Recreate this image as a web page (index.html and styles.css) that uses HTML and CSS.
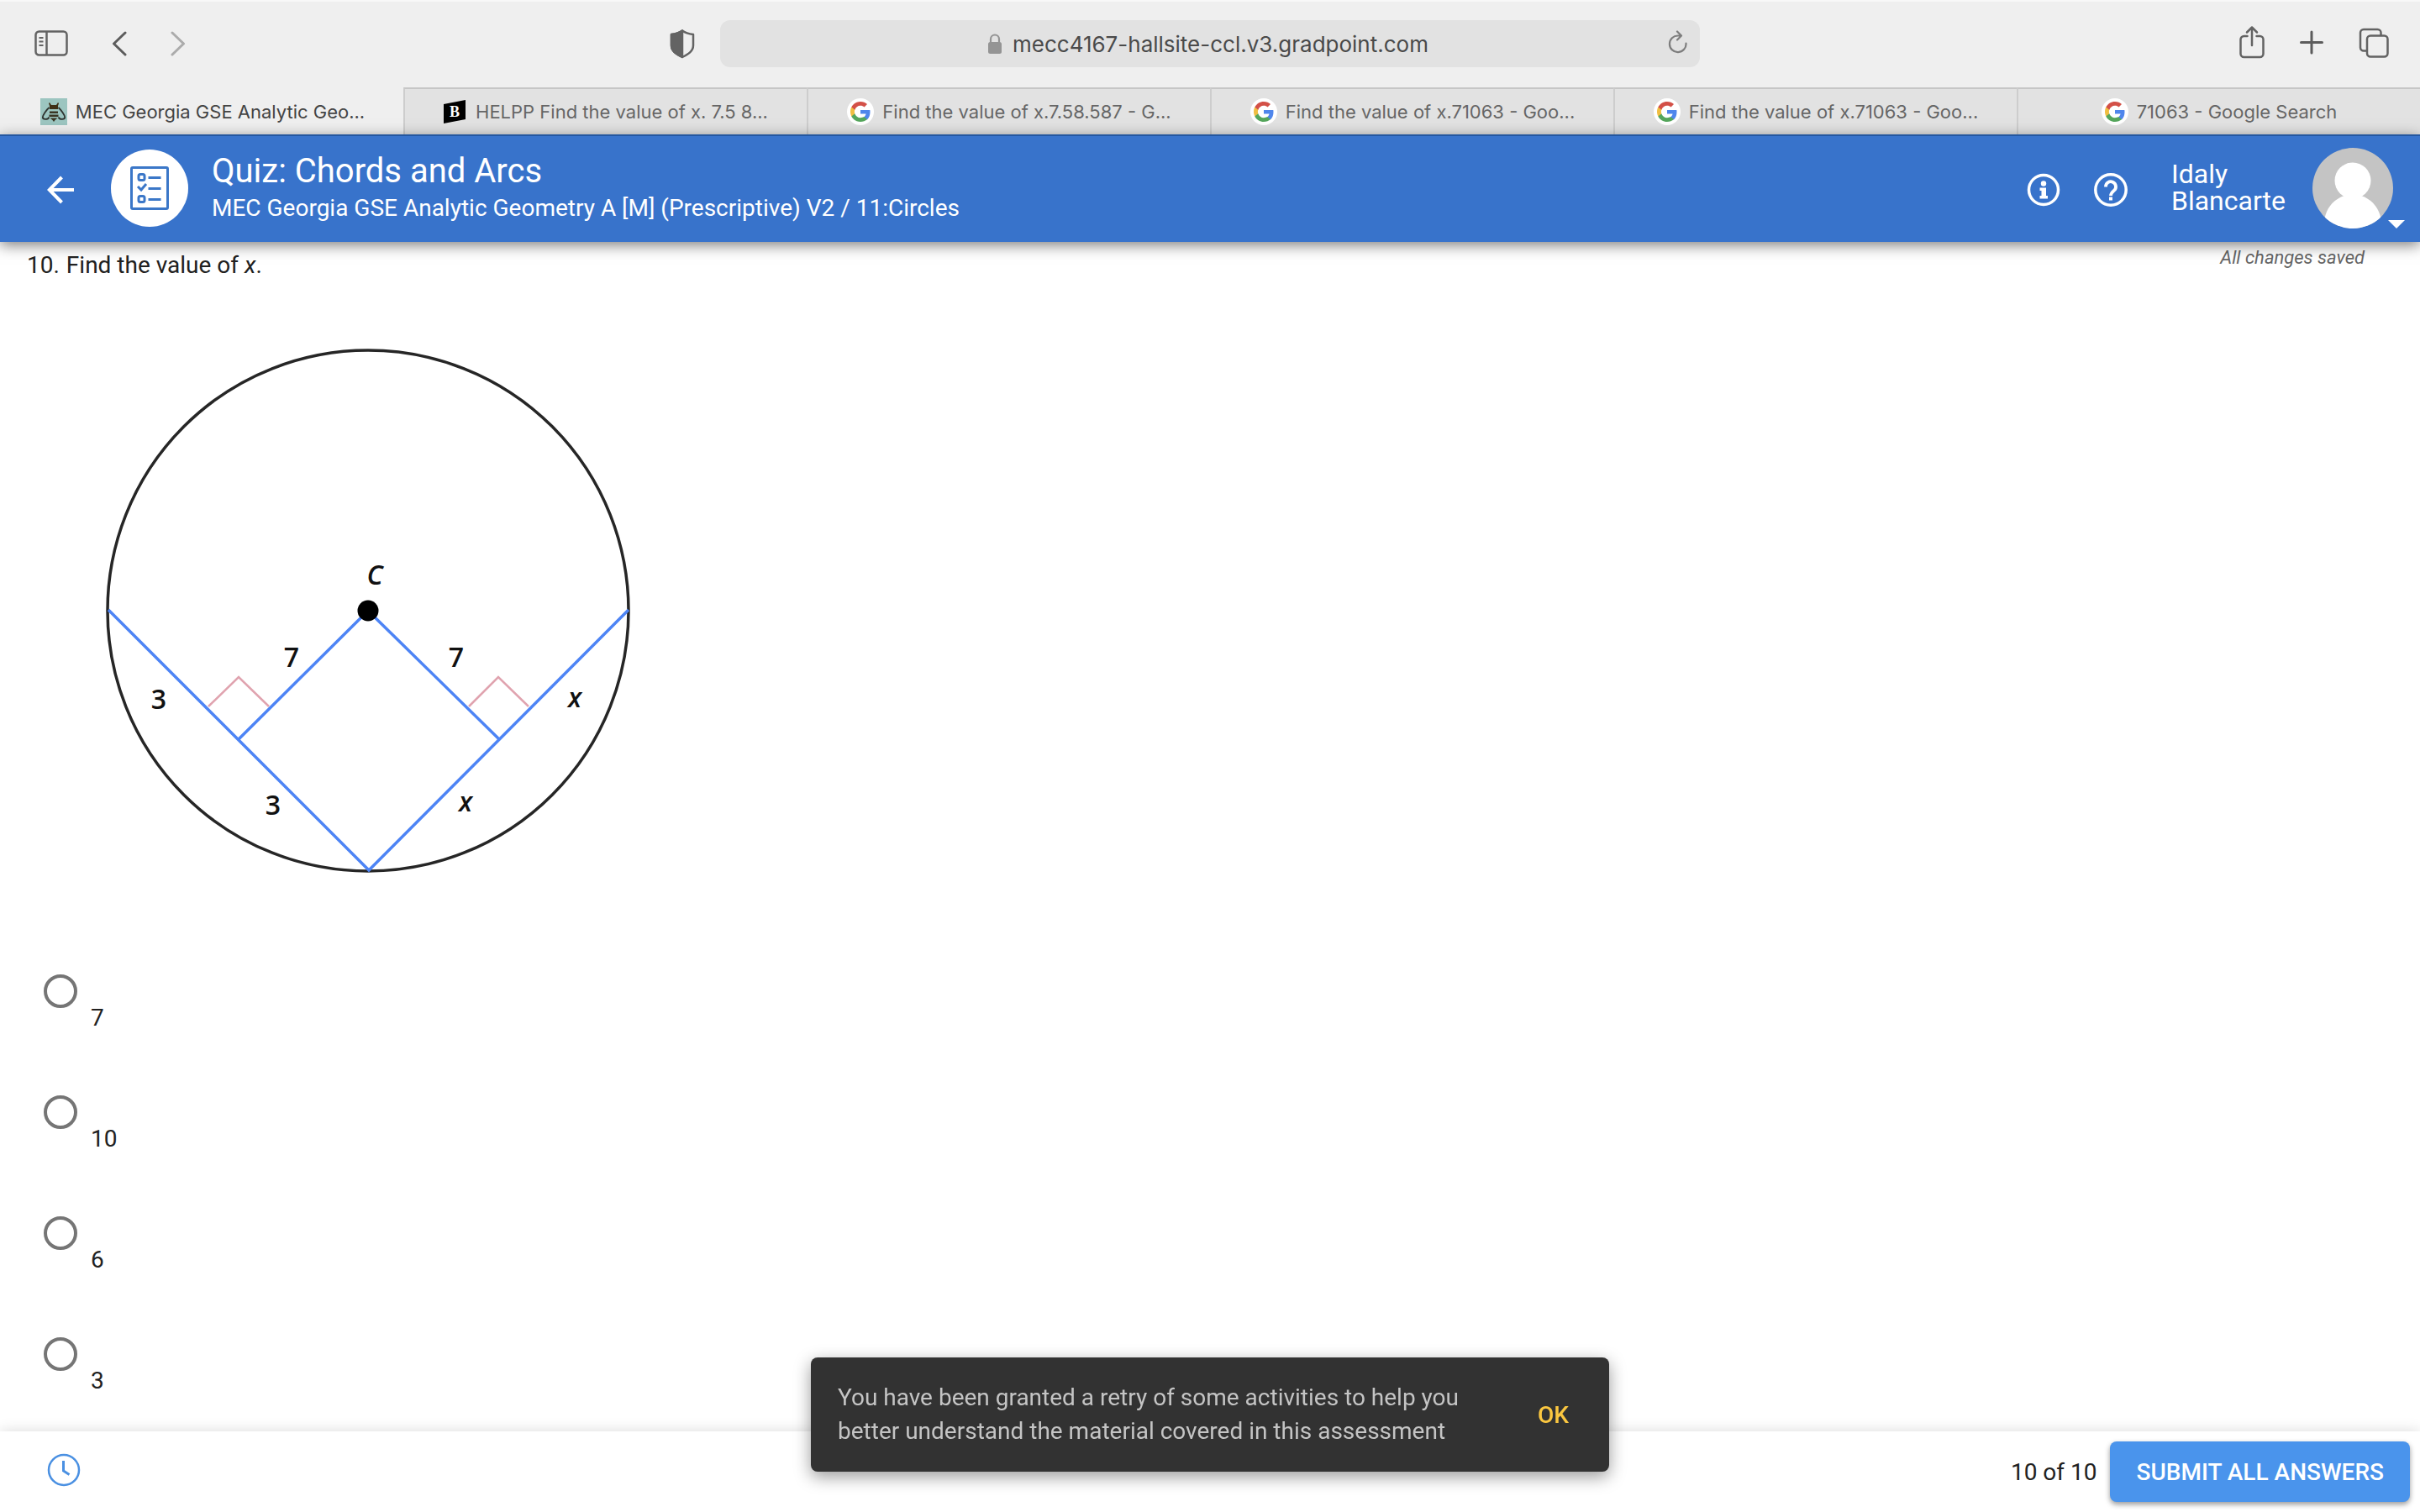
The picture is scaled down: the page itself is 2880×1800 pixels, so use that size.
FILE: index.html
```html
<!DOCTYPE html>
<html lang="en">
    <head>
        <meta charset="utf-8">
        <title>Quiz: Chords and Arcs</title>
        <link rel="stylesheet" href="styles.css">
    </head>
    <body>
        <svg class="sprite" aria-hidden="true">
            <symbol id="google" viewBox="0 0 32 32">
                <circle cx="16" cy="16" r="16" fill="#fff"/>
                <g transform="translate(4 4)">
                    <path fill="#4f86ec" d="M23.5 12.3c0-.9-.1-1.5-.2-2.3H12v4.6h6.6c-.3 1.5-1.100 2.800-2.400 3.700v3h3.900c2.200-2.100 3.400-5.200 3.400-9z"/>
                    <path fill="#55a65c" d="M12 24c3.200 0 6-1.100 8-2.900l-3.900-3c-1.100.7-2.500 1.200-4.100 1.200-3.100 0-5.800-2.100-6.700-5H1.300v3.100C3.300 21.300 7.300 24 12 24z"/>
                    <path fill="#f0be42" d="M5.300 14.300c-.2-.7-.4-1.500-.4-2.300s.1-1.600.4-2.300V6.600H1.300C.5 8.200 0 10 0 12s.5 3.800 1.300 5.400z"/>
                    <path fill="#d35047" d="M12 4.700c1.800 0 3.300.6 4.600 1.800L20 3.100C18 1.200 15.200 0 12 0 7.300 0 3.300 2.700 1.300 6.600l4 3.100c.9-2.900 3.600-5 6.700-5z"/>
                </g>
            </symbol>
        </svg>

        <div class="toolbar">
            <div class="tools tools-left">
                <button class="tool" aria-label="Show sidebar">
                    <svg width="40" height="32" viewBox="0 0 40 32" fill="none" stroke="#636363" stroke-width="2.500">
                        <rect x="1.500" y="1.500" width="37" height="28" rx="4"/>
                        <path d="M14.500 2v27"/>
                        <path d="M5.500 9h5M5.500 13.500h5M5.500 18h5" stroke-width="1.800"/>
                    </svg>
                </button>
                <button class="tool" aria-label="Back">
                    <svg width="18" height="32" viewBox="0 0 18 32" fill="none" stroke="#5c5c5c" stroke-width="3" stroke-linecap="round" stroke-linejoin="round"><path d="M16 3L2.500 16 16 29"/></svg>
                </button>
                <button class="tool" aria-label="Forward">
                    <svg width="18" height="32" viewBox="0 0 18 32" fill="none" stroke="#ababab" stroke-width="3" stroke-linecap="round" stroke-linejoin="round"><path d="M2 3l13.500 13L2 29"/></svg>
                </button>
                <button class="tool tool-shield" aria-label="Privacy report">
                    <svg width="30" height="36" viewBox="0 0 30 36" fill="none" stroke="#636363" stroke-width="2.500" stroke-linejoin="round">
                        <path d="M15 2.500C11 5.500 6.500 6.500 2 7v13c0 7 6 10.500 13 14 7-3.500 13-7 13-14V7c-4.500-.5-9-1.500-13-4.500z"/>
                        <path fill="#636363" d="M15 2.500C11 5.500 6.500 6.500 2 7v13c0 7 6 10.500 13 14z"/>
                    </svg>
                </button>
            </div>
            <div class="address">
                <div class="address-text">
                    <svg width="18" height="26" viewBox="0 0 18 26"><path d="M4 12V7.500a5 5 0 0 1 10 0V12" fill="none" stroke="#949494" stroke-width="2.200"/><rect x="1" y="11" width="16" height="14" rx="2.500" fill="#949494"/></svg>
                    <input type="text" aria-label="Address" value="mecc4167-hallsite-ccl.v3.gradpoint.com">
                </div>
                <button class="tool" aria-label="Reload">
                    <svg width="24" height="28" viewBox="0 0 24 28" fill="none" stroke="#7d7d7d" stroke-width="2.200" stroke-linecap="round" stroke-linejoin="round"><path d="M21.500 15.500A9.800 9.800 0 1 1 12 6.500h3.500M11 1.500l5 5-5 5"/></svg>
                </button>
            </div>
            <div class="tools tools-right">
                <button class="tool" aria-label="Share">
                    <svg width="30" height="40" viewBox="0 0 30 40" fill="none" stroke="#636363" stroke-width="2.500" stroke-linecap="round" stroke-linejoin="round"><path d="M9.500 13H5.500a4 4 0 0 0-4 4v17a4 4 0 0 0 4 4h19a4 4 0 0 0 4-4V17a4 4 0 0 0-4-4h-4M15 24V2.500M9 8.500l6-6 6 6"/></svg>
                </button>
                <button class="tool" aria-label="New tab">
                    <svg width="28" height="40" viewBox="0 0 28 40" fill="none" stroke="#5c5c5c" stroke-width="3" stroke-linecap="round"><path d="M14 8v25M1.500 20.500h25"/></svg>
                </button>
                <button class="tool" aria-label="Show all tabs">
                    <svg width="36" height="40" viewBox="0 0 36 40" fill="none" stroke="#636363" stroke-width="2.500"><path d="M9.500 30.500H6a4 4 0 0 1-4-4V9a4 4 0 0 1 4-4h16.500a4 4 0 0 1 4 4v3.500"/><rect x="10" y="12.500" width="24.500" height="25" rx="4"/></svg>
                </button>
            </div>
        </div>

        <nav class="tabs">
            <a class="tab active" href="#">
                <svg width="32" height="32" viewBox="0 0 32 32">
                    <rect width="32" height="32" fill="#9cc5c0"/>
                    <path d="M11 5l2 3h6l2-3 1 1-1 3v4H11V9l-1-3z" fill="#3f2f16"/>
                    <path d="M10.500 11C7 14 3 20 2.800 22.500c0 3 6 3.500 7.700 0M21.500 11c3.500 3 7.500 9 7.700 11.500 0 3-6 3.500-7.700 0" fill="none" stroke="#2f3430" stroke-width="1.800"/>
                    <path d="M11 15.500h10v2.500H11zM10.500 19.500h11V22h-11zM11.500 23.500h9l-3 2.500-1.500 2-1.500-2z" fill="#3a3524"/>
                </svg>
                <span>MEC Georgia GSE Analytic Geo...</span>
            </a>
            <a class="tab" href="#">
                <svg width="28" height="32" viewBox="2 0 28 32">
                    <path d="M2 7l26-5v23L2 30z" fill="#000"/>
                    <text class="brainly" x="15" y="22" text-anchor="middle">B</text>
                </svg>
                <span>HELPP Find the value of x. 7.5 8...</span>
            </a>
            <a class="tab" href="#">
                <svg width="32" height="32"><use href="#google"/></svg>
                <span>Find the value of x.7.58.587 - G...</span>
            </a>
            <a class="tab" href="#">
                <svg width="32" height="32"><use href="#google"/></svg>
                <span>Find the value of x.71063 - Goo...</span>
            </a>
            <a class="tab" href="#">
                <svg width="32" height="32"><use href="#google"/></svg>
                <span>Find the value of x.71063 - Goo...</span>
            </a>
            <a class="tab" href="#">
                <svg width="32" height="32"><use href="#google"/></svg>
                <span>71063 - Google Search</span>
            </a>
        </nav>

        <header class="header">
            <button class="icon-btn" aria-label="Go back">
                <svg width="32" height="34" viewBox="0 0 32 34" fill="none" stroke="#fff" stroke-width="4"><path d="M32 17H3M17.500 2L2.800 17l14.700 15"/></svg>
            </button>
            <div class="quiz-icon">
                <svg width="46" height="52" viewBox="0 0 46 52" fill="none" stroke="#3b77c8" stroke-width="3">
                    <rect x="1.500" y="1.500" width="43" height="49" rx="1.500"/>
                    <rect x="10" y="9.500" width="7" height="7" rx="2"/>
                    <rect x="10" y="35.500" width="7" height="7" rx="2"/>
                    <path d="M9 24l4 4 6-7M21.500 13.500h15M21.500 26.500h15M21.500 39.500h15"/>
                </svg>
            </div>
            <div class="titles">
                <h1>Quiz: Chords and Arcs</h1>
                <p>MEC Georgia GSE Analytic Geometry A [M] (Prescriptive) V2 / 11:Circles</p>
            </div>
            <div class="header-right">
                <button class="icon-btn" aria-label="Information">
                    <svg width="40" height="40" viewBox="0 0 40 40"><circle cx="20" cy="20" r="17.500" fill="none" stroke="#fff" stroke-width="3.500"/><circle cx="20" cy="12.500" r="3.200" fill="#fff"/><path d="M15.500 17.500h7.500v9.500h2v3.500h-9.500V27h2v-6h-2z" fill="#fff"/></svg>
                </button>
                <button class="icon-btn" aria-label="Help">
                    <svg width="40" height="40" viewBox="0 0 40 40" fill="none" stroke="#fff"><circle cx="20" cy="20" r="18.200" stroke-width="3.500"/><path d="M14 16.500a6 6 0 1 1 10 4.200c-2.500 2.200-4 3.300-4 6.300" stroke-width="3.800"/><path d="M18 28.500h4v4h-4z" fill="#fff" stroke="none"/></svg>
                </button>
                <span class="user-name">Idaly<br>Blancarte</span>
                <button class="avatar" aria-label="Account menu">
                    <svg width="96" height="96" viewBox="0 0 96 96">
                        <clipPath id="round"><circle cx="48" cy="48" r="48"/></clipPath>
                        <g clip-path="url(#round)">
                            <rect width="96" height="96" fill="#c4c4c4"/>
                            <circle cx="48" cy="39" r="21.500" fill="#fff"/>
                            <path d="M38 54v3C26 61 18 70 15 82v14h66V82c-3-12-11-21-23-25v-3z" fill="#fff"/>
                        </g>
                    </svg>
                    <svg class="caret" width="20" height="10" viewBox="0 0 20 10"><path d="M0 0h20L10 10z" fill="#fff"/></svg>
                </button>
            </div>
        </header>

        <main class="content">
            <div class="question">
                <span>10.</span>
                <p>Find the value of <i>x</i>.</p>
                <em class="saved">All changes saved</em>
            </div>

            <svg class="figure" width="640" height="640" viewBox="118 407 640 640" role="img" aria-label="Circle with center C and two chords">
                <circle cx="438" cy="727" r="310" fill="none" stroke="#262626" stroke-width="3.500"/>
                <g fill="none" stroke="#e0a3af" stroke-width="2.500">
                    <path d="M248 841l36-35 36 35M558 841l35-35 36 35"/>
                </g>
                <g fill="none" stroke="#4d84f5" stroke-width="3.500">
                    <path d="M129 726l310 310 309-310M438 727L284 880M438 727l156 153"/>
                </g>
                <circle cx="438" cy="727" r="12.500"/>
                <g class="figure-text">
                    <text x="446" y="696" class="var">C</text>
                    <text x="347" y="794">7</text>
                    <text x="543" y="794">7</text>
                    <text x="189" y="844">3</text>
                    <text x="325" y="970">3</text>
                    <text x="684" y="842" class="var">x</text>
                    <text x="554" y="966" class="var">x</text>
                </g>
            </svg>

            <div class="answers">
                <label class="answer"><input type="radio" name="answer"><span>7</span></label>
                <label class="answer"><input type="radio" name="answer"><span>10</span></label>
                <label class="answer"><input type="radio" name="answer"><span>6</span></label>
                <label class="answer"><input type="radio" name="answer"><span>3</span></label>
            </div>
        </main>

        <footer class="footer">
            <button class="timer-btn" aria-label="Time">
                <svg width="40" height="40" viewBox="0 0 40 40" fill="none" stroke="#4a90e2"><circle cx="20" cy="20" r="18" stroke-width="2.500"/><path d="M19.500 9v12l7 4.500" stroke-width="3"/></svg>
            </button>
            <span class="progress">10 of 10</span>
            <button class="submit-btn">SUBMIT ALL ANSWERS</button>
        </footer>

        <div class="snackbar" role="status">
            <p>You have been granted a retry of some activities to help you better understand the material covered in this assessment</p>
            <button class="ok-btn">OK</button>
        </div>
    </body>
</html>
```
FILE: styles.css
```css
*{
    box-sizing: border-box;
}
body{
    display: flex;
    flex-direction: column;
    height: 100vh;
    margin: 0;
    overflow: hidden;
    background-color: #fff;
    color: #212121;
    font-family: Roboto, sans-serif;
    font-size: 28px;
}
h1, p{
    margin: 0;
    font-weight: 400;
}
svg{
    display: block;
    flex: none;
}
button{
    padding: 0;
    border: 0;
    background: none;
    font-family: inherit;
    cursor: pointer;
}
.sprite{
    position: absolute;
    width: 0;
    height: 0;
}

/* browser toolbar */
.toolbar{
    display: flex;
    align-items: center;
    justify-content: center;
    flex: none;
    height: 104px;
    background-color: #efefef;
    box-shadow: inset 0 2px #f8f8f8;
    font-family: Inter, sans-serif;
}
.tools{
    display: flex;
    align-items: center;
    width: 29.75%;
}
.tools-left{
    padding: 0 30px 0 41px;
    gap: 52px;
}
.tool-shield{
    margin-left: auto;
}
.tools-right{
    justify-content: flex-end;
    gap: 42px;
    padding: 0 37px 4px 0;
}
.address{
    display: grid;
    grid-template-columns: 1fr auto 1fr;
    align-items: center;
    width: 40.5%;
    height: 56px;
    padding: 0 14px;
    border-radius: 12px;
    background-color: #e2e2e2;
}
.address-text{
    display: flex;
    align-items: center;
    grid-column: 2;
    gap: 12px;
}
.address input{
    width: 500px;
    padding: 0;
    border: 0;
    background: none;
    color: #4a4a4a;
    font-family: inherit;
    font-size: 26px;
}
.address .tool{
    justify-self: end;
    padding-bottom: 4px;
}

.tabs{
    display: flex;
    flex: none;
    height: 56px;
}
.tab{
    display: flex;
    flex: 1;
    align-items: center;
    justify-content: center;
    gap: 10px;
    border-top: 2px solid #c6c6c6;
    border-left: 2px solid #cdcdcd;
    background-color: #e2e2e2;
    color: #666;
    font-family: Inter, sans-serif;
    font-size: 22px;
    text-decoration: none;
    white-space: nowrap;
}
.tab.active{
    border-color: #efefef;
    background-color: #efefef;
    color: #444;
}
.brainly{
    fill: #fff;
    font-family: "Liberation Serif", serif;
    font-size: 18px;
    font-weight: 700;
}

/* quiz header */
.header{
    display: flex;
    align-items: center;
    flex: none;
    height: 128px;
    padding: 0 32px 0 56px;
    background-color: #3873cb;
    color: #fff;
    box-shadow: inset 0 2px #2457a0, 0 4px 16px rgba(0, 0, 0, .5);
    z-index: 1;
}
.icon-btn{
    padding-top: 4px;
}
.quiz-icon{
    display: flex;
    align-items: center;
    justify-content: center;
    width: 92px;
    height: 92px;
    margin: 0 28px 0 44px;
    border-radius: 50%;
    background-color: #fff;
}
.titles h1{
    font-size: 40px;
    line-height: 48px;
}
.titles p{
    line-height: 40px;
}
.header-right{
    display: flex;
    align-items: center;
    gap: 40px;
    margin-left: auto;
}
.user-name{
    margin-left: 12px;
    padding-bottom: 2px;
    font-size: 32px;
    line-height: 32px;
}
.avatar{
    position: relative;
    margin-left: -8px;
}
.caret{
    position: absolute;
    right: -14px;
    bottom: 0;
}

.content{
    flex: 1;
    min-height: 0;
    padding-left: 32px;
}
.question{
    display: flex;
    gap: 8px;
    height: 119px;
    padding-top: 11px;
    line-height: 34px;
}
.saved{
    margin: -9px 66px 0 auto;
    color: #666;
    font-size: 22px;
}
.figure{
    margin-left: 86px;
}
.figure-text{
    font-family: "Open Sans", sans-serif;
    font-size: 32px;
    font-weight: 600;
    text-anchor: middle;
    fill: #111;
}
.var{
    font-style: italic;
}
.answers{
    padding: 113px 0 0 20px;
}
.answer{
    display: flex;
    gap: 16px;
    height: 144px;
}
.answer input{
    appearance: none;
    width: 40px;
    height: 40px;
    margin: 0;
    border: 4px solid #757575;
    border-radius: 50%;
}
.answer span{
    padding-top: 35px;
    line-height: 34px;
}

.footer{
    display: flex;
    align-items: center;
    flex: none;
    height: 96px;
    padding: 0 12px 0 56px;
    background-color: #fff;
    box-shadow: 0 0 16px rgba(0, 0, 0, .15);
    z-index: 1;
}
.timer-btn{
    padding-bottom: 4px;
}
.progress{
    margin: 0 16px 0 auto;
}
.submit-btn{
    height: 72px;
    padding: 0 31px;
    border-radius: 8px;
    background-color: #4a94ec;
    box-shadow: 0 3px 6px rgba(0, 0, 0, .4);
    color: #fff;
    font-size: 28px;
    font-weight: 500;
}

.snackbar{
    position: fixed;
    bottom: 48px;
    left: 50%;
    display: flex;
    align-items: center;
    justify-content: space-between;
    width: 950px;
    padding: 28px 48px 28px 32px;
    border-radius: 8px;
    background-color: #323232;
    box-shadow: 0 6px 20px rgba(0, 0, 0, .4);
    color: #c4c4c4;
    line-height: 40px;
    transform: translateX(-50%);
    z-index: 2;
}
.snackbar p{
    width: 760px;
}
.ok-btn{
    color: #fbc740;
    font-size: 28px;
    font-weight: 500;
}
```
